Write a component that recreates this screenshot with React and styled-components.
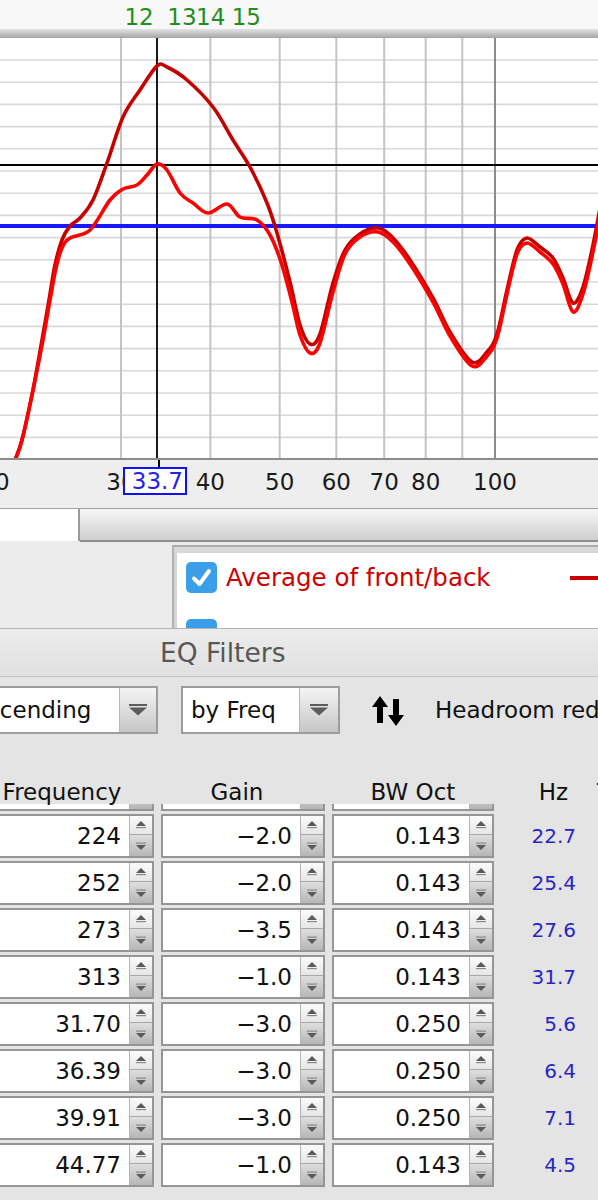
import React from "react";
import styled, { createGlobalStyle } from "styled-components";

const fx = (f) => 121 + 715.3 * Math.log10(f / 30);

const markers = [
  { id: 12, freq: 31.7 },
  { id: 13, freq: 36.39 },
  { id: 14, freq: 39.91 },
  { id: 15, freq: 44.77 },
];

const axisLabels = [20, 30, 40, 50, 60, 70, 80, 100];
const gridFreqs = [30, 40, 50, 60, 70, 80, 90];

const darkCurve = [
  [15, 460], [22, 440], [33, 390], [42, 340], [49, 300], [55, 265], [62, 240],
  [70, 226], [80, 218], [93, 200], [107, 163], [123, 117], [140, 90], [157, 66],
  [167, 67], [187, 80], [213, 107], [233, 140], [250, 167], [267, 203], [277, 233],
  [290, 282], [300, 325], [310, 344], [320, 334], [333, 283], [345, 250], [360, 234],
  [378, 228], [393, 238], [410, 260], [433, 298], [450, 332], [472, 362], [487, 352],
  [497, 334], [507, 290], [517, 250], [527, 238], [540, 247], [553, 258], [563, 278],
  [573, 303], [583, 287], [593, 245], [600, 208],
];

const brightCurve = [
  [15, 460], [22, 440], [33, 390], [43, 340], [50, 300], [56, 268], [62, 248],
  [70, 238], [90, 230], [110, 200], [123, 189], [137, 185], [147, 175], [157, 164],
  [167, 170], [180, 193], [193, 203], [208, 213], [227, 204], [240, 217], [257, 220],
  [270, 235], [281, 262], [292, 302], [300, 335], [310, 353], [320, 343], [333, 292],
  [345, 254], [360, 237], [378, 232], [393, 242], [410, 264], [433, 302], [450, 336],
  [472, 366], [487, 356], [497, 338], [507, 294], [517, 254], [527, 243], [540, 252],
  [553, 264], [563, 284], [573, 312], [583, 294], [593, 252], [600, 214],
];

// first entry is the row scrolled up under the header: only its bottom edge shows
const filters = [
  { freq: "", gain: "", bw: "", hz: "" },
  { freq: "224", gain: "−2.0", bw: "0.143", hz: "22.7" },
  { freq: "252", gain: "−2.0", bw: "0.143", hz: "25.4" },
  { freq: "273", gain: "−3.5", bw: "0.143", hz: "27.6" },
  { freq: "313", gain: "−1.0", bw: "0.143", hz: "31.7" },
  { freq: "31.70", gain: "−3.0", bw: "0.250", hz: "5.6" },
  { freq: "36.39", gain: "−3.0", bw: "0.250", hz: "6.4" },
  { freq: "39.91", gain: "−3.0", bw: "0.250", hz: "7.1" },
  { freq: "44.77", gain: "−1.0", bw: "0.143", hz: "4.5" },
];

function smooth(pts) {
  let d = `M${pts[0][0]},${pts[0][1]}`;
  for (let i = 0; i < pts.length - 1; i++) {
    const p0 = pts[i - 1] || pts[i];
    const p1 = pts[i];
    const p2 = pts[i + 1];
    const p3 = pts[i + 2] || p2;
    const c1x = p1[0] + (p2[0] - p0[0]) / 6;
    const c1y = p1[1] + (p2[1] - p0[1]) / 6;
    const c2x = p2[0] - (p3[0] - p1[0]) / 6;
    const c2y = p2[1] - (p3[1] - p1[1]) / 6;
    d += ` C${c1x.toFixed(1)},${c1y.toFixed(1)} ${c2x.toFixed(1)},${c2y.toFixed(1)} ${p2[0]},${p2[1]}`;
  }
  return d;
}

function SpinArrows() {
  return (
    <SpinButtons>
      <SpinUp>
        <svg width="10" height="8" viewBox="0 0 10 8">
          <polygon points="0,5 5,0 10,5" fill="#5a5a5a" />
          <rect x="0" y="6" width="10" height="1.2" fill="#8a8a8a" />
        </svg>
      </SpinUp>
      <SpinDown>
        <svg width="10" height="8" viewBox="0 0 10 8">
          <rect x="0" y="0.5" width="10" height="1.2" fill="#8a8a8a" />
          <polygon points="0,3 10,3 5,8" fill="#5a5a5a" />
        </svg>
      </SpinDown>
    </SpinButtons>
  );
}

function Spinner({ value }) {
  return (
    <SpinBox>
      <SpinValue>{value}</SpinValue>
      <SpinArrows />
    </SpinBox>
  );
}

function Combo({ width, arrowWidth, children }) {
  return (
    <ComboBox $w={width}>
      <ComboText>{children}</ComboText>
      <ComboArrow $w={arrowWidth}>
        <svg width="18" height="12" viewBox="0 0 18 12">
          <rect x="0" y="0" width="18" height="2" fill="#5c5c5c" />
          <polygon points="0,3.5 18,3.5 9,11.5" fill="#5c5c5c" />
        </svg>
      </ComboArrow>
    </ComboBox>
  );
}

export default function App() {
  const hLines = Array.from({ length: 18 }, (_, i) => 60 + 22.2 * i);

  return (
    <>
      <GlobalStyle />
      <Page>
        <MarkerStrip>
          {markers.map((m) => (
            <Marker key={m.id} style={{ left: fx(m.freq) + 1 }}>
              {m.id}
            </Marker>
          ))}
        </MarkerStrip>
        <ChartEdge />
        <Plot width="598" height="420" viewBox="0 38 598 420">
          <rect x="0" y="38" width="598" height="420" fill="#ffffff" />
          {hLines.map((y) => (
            <line key={y} x1="0" x2="598" y1={y} y2={y} stroke="#d8d8d8" strokeWidth="1.6" />
          ))}
          {gridFreqs.map((f) => (
            <line key={f} x1={fx(f)} x2={fx(f)} y1="38" y2="458" stroke="#c4c4c4" strokeWidth="2" />
          ))}
          <line x1={fx(100)} x2={fx(100)} y1="38" y2="458" stroke="#8a8a8a" strokeWidth="2" />
          <line x1="0" x2="598" y1="165" y2="165" stroke="#000" strokeWidth="1.8" />
          <line x1="157" x2="157" y1="38" y2="458" stroke="#000" strokeWidth="1.8" />
          <line x1="0" x2="598" y1="226" y2="226" stroke="#1818ff" strokeWidth="4" />
          <path d={smooth(darkCurve)} fill="none" stroke="#c40000" strokeWidth="3.6" strokeLinejoin="round" />
          <path d={smooth(brightCurve)} fill="none" stroke="#ff0000" strokeWidth="3.6" strokeLinejoin="round" />
        </Plot>
        <AxisStrip>
          {axisLabels.map((f) => (
            <AxisLabel key={f} style={{ left: fx(f) }}>
              {f}
            </AxisLabel>
          ))}
          <CursorBox>33.7</CursorBox>
        </AxisStrip>
        <ScrollRow>
          <ScrollTrack />
          <ScrollThumb />
        </ScrollRow>
        <LegendArea>
          <LegendBox>
            <LegendRow>
              <Check>
                <svg width="31" height="31" viewBox="0 0 31 31">
                  <path d="M8 16.5 L13.5 22 L23 9" fill="none" stroke="#fff" strokeWidth="4" strokeLinecap="round" strokeLinejoin="round" />
                </svg>
              </Check>
              <LegendLabel>Average of front/back</LegendLabel>
              <LegendSwatch />
            </LegendRow>
            <LegendRow>
              <Check />
              <LegendLabel $low>Individual front/back</LegendLabel>
              <LegendSwatch />
            </LegendRow>
          </LegendBox>
        </LegendArea>
        <EQPanel>
          <EQTitle>EQ Filters</EQTitle>
          <EQBody>
            <Toolbar>
              <Combo width={212} arrowWidth={36}>Descending</Combo>
              <ComboGap />
              <Combo width={159} arrowWidth={38}>by Freq</Combo>
              <SortIcon width="32" height="31" viewBox="0 0 32 31">
                <polygon points="8,1 0,12 5,12 5,28 11,28 11,12 16,12" fill="#000" />
                <polygon points="21,4 27,4 27,20 32,20 24,31 16,20 21,20" fill="#000" />
              </SortIcon>
              <HeadroomLabel>Headroom reduction</HeadroomLabel>
            </Toolbar>
            <HeaderRow>
              <HeaderCell $shift={5}>Frequency</HeaderCell>
              <HeaderCell $shift={-6}>Gain</HeaderCell>
              <HeaderCell $shift={0}>BW Oct</HeaderCell>
              <HeaderCell $right>Hz</HeaderCell>
              <HeaderCell $left>Type</HeaderCell>
            </HeaderRow>
            <Viewport>
              <RowList>
                {filters.map((r, i) => (
                  <Row key={i}>
                    <Spinner value={r.freq} />
                    <Spinner value={r.gain} />
                    <Spinner value={r.bw} />
                    <HzCell>{r.hz}</HzCell>
                  </Row>
                ))}
              </RowList>
            </Viewport>
          </EQBody>
        </EQPanel>
      </Page>
    </>
  );
}

const GlobalStyle = createGlobalStyle`
  html, body {
    margin: 0;
    padding: 0;
    overflow: hidden;
  }
  body {
    width: 598px;
    height: 1200px;
    background: #e4e4e4;
    font-family: "DejaVu Sans", "Liberation Sans", sans-serif;
    color: #111;
  }
`;

const Page = styled.div`
  width: 598px;
  height: 1200px;
  overflow: hidden;
  display: flex;
  flex-direction: column;
`;

const MarkerStrip = styled.div`
  position: relative;
  height: 29px;
  flex: none;
  background: #f8f8f8;
`;

const Marker = styled.span`
  position: absolute;
  top: 4px;
  transform: translateX(-50%);
  font-size: 23px;
  line-height: 26px;
  color: #1f8f1f;
`;

const ChartEdge = styled.div`
  height: 9px;
  flex: none;
  background: linear-gradient(#e4e4e4, #a4a4a4);
`;

const Plot = styled.svg`
  display: block;
  flex: none;
`;

const AxisStrip = styled.div`
  position: relative;
  flex: none;
  height: 48px;
  border-top: 2px solid #8c8c8c;
  background: #eeeeee;
  font-size: 23px;
  color: #1a1a1a;
`;

const AxisLabel = styled.span`
  position: absolute;
  top: 8px;
  transform: translateX(-50%);
  line-height: 28px;
`;

const CursorBox = styled.span`
  position: absolute;
  left: 123px;
  top: 7px;
  width: 64px;
  height: 28px;
  box-sizing: border-box;
  border: 2px solid #1010ff;
  background: #fff;
  color: #2323ee;
  text-align: right;
  padding-right: 2px;
  line-height: 24px;

  &::before {
    content: "";
    position: absolute;
    left: 33px;
    top: -9px;
    width: 2px;
    height: 7px;
    background: #000;
  }
`;

const ScrollRow = styled.div`
  display: flex;
  align-items: flex-start;
  flex: none;
  height: 34px;
  border-top: 1px solid #a0a0a0;
  background: #ececec;
`;

const ScrollTrack = styled.div`
  width: 78px;
  height: 32px;
  background: #fff;
  border-right: 2px solid #9a9a9a;
`;

const ScrollThumb = styled.div`
  flex: 1;
  height: 31px;
  background: linear-gradient(#f6f6f6, #cfcfcf);
  border-bottom: 2px solid #8e8e8e;
`;

const LegendArea = styled.div`
  flex: none;
  height: 85px;
  overflow: hidden;
  background: #ececec;
  padding-left: 172px;
  padding-top: 2px;
  box-sizing: border-box;
`;

const LegendBox = styled.div`
  width: 424px;
  padding: 15px 0 0 12px;
  background: #fff;
  border-top: 2px solid #ababab;
  border-left: 2px solid #b2b2b2;
  box-shadow: inset 0 6px 0 #d8d8d8, inset 3px 0 0 #d4d4d4;
`;

const LegendRow = styled.div`
  display: flex;
  align-items: center;
  height: 31px;
  gap: 9px;
  margin-bottom: 26px;
`;

const Check = styled.div`
  flex: none;
  width: 31px;
  height: 31px;
  border-radius: 5px;
  background: #3a9ee8;
  display: flex;
`;

const LegendLabel = styled.span`
  font-size: 24.5px;
  color: #d00000;
  white-space: nowrap;
  transform: translateY(${(p) => (p.$low ? 4 : 0)}px);
`;

const LegendSwatch = styled.div`
  margin-left: auto;
  width: 40px;
  height: 4px;
  background: #cc0000;
`;

const EQPanel = styled.div`
  flex: 1;
  display: flex;
  flex-direction: column;
  border-top: 1px solid #b4b4b4;
  background: #e4e4e4;
`;

const EQTitle = styled.div`
  height: 47px;
  line-height: 47px;
  padding-left: 160px;
  font-size: 26.5px;
  color: #575757;
  background: linear-gradient(#ececec, #e0e0e0);
  border-bottom: 1px solid #c4c4c4;
`;

const EQBody = styled.div`
  flex: 1;
  padding-top: 9px;
  display: flex;
  flex-direction: column;
  min-height: 0;
`;

const Toolbar = styled.div`
  display: flex;
  align-items: center;
  height: 48px;
  margin-left: -54px;
  white-space: nowrap;
`;

const ComboBox = styled.div`
  flex: none;
  display: flex;
  width: ${(p) => p.$w}px;
  height: 48px;
  box-sizing: border-box;
  border: 2px solid #9c9c9c;
  background: #fff;
`;

const ComboText = styled.div`
  flex: 1;
  padding-left: 8px;
  font-size: 23px;
  line-height: 44px;
  overflow: hidden;
`;

const ComboArrow = styled.div`
  flex: none;
  width: ${(p) => p.$w}px;
  display: flex;
  align-items: center;
  justify-content: center;
  border-left: 1px solid #b8b8b8;
  background: linear-gradient(#f4f4f4, #c6c6c6);
`;

const ComboGap = styled.div`
  width: 23px;
  flex: none;
`;

const SortIcon = styled.svg`
  flex: none;
  margin-left: 32px;
`;

const HeadroomLabel = styled.span`
  margin-left: 31px;
  font-size: 23px;
  color: #111;
`;

const tableColumns = `
  display: grid;
  grid-template-columns: 194px 164px 162px 82px 100px;
  column-gap: 7px;
  margin-left: -40px;
`;

const HeaderRow = styled.div`
  ${tableColumns}
  margin-top: 38px;
  height: 32px;
  flex: none;
  font-size: 23px;
  line-height: 40px;
  white-space: nowrap;
`;

const HeaderCell = styled.div`
  text-align: ${(p) => (p.$right ? "right" : p.$left ? "left" : "center")};
  padding-right: ${(p) => (p.$right ? 15 : 0)}px;
  padding-left: ${(p) => (p.$left ? 7 : 0)}px;
  transform: translateX(${(p) => p.$shift || 0}px);
`;

const Viewport = styled.div`
  flex: 1;
  overflow: hidden;
`;

const RowList = styled.div`
  display: flex;
  flex-direction: column;
  gap: 3px;
  margin-top: -37px;
`;

const Row = styled.div`
  ${tableColumns}
  height: 44px;
`;

const SpinBox = styled.div`
  display: flex;
  height: 44px;
  box-sizing: border-box;
  border: 2px solid #959595;
  background: #fff;
`;

const SpinValue = styled.div`
  flex: 1;
  text-align: right;
  padding-right: 8px;
  font-size: 23px;
  line-height: 40px;
  border-right: 1px solid #b4b4b4;
`;

const SpinButtons = styled.div`
  flex: none;
  width: 22px;
  display: flex;
  flex-direction: column;
`;

const SpinUp = styled.div`
  flex: 0 0 18px;
  display: flex;
  align-items: center;
  justify-content: center;
  background: linear-gradient(#fbfbfb, #e6e6e6);
  border-bottom: 1px solid #a8a8a8;
`;

const SpinDown = styled.div`
  flex: 1;
  display: flex;
  align-items: center;
  justify-content: center;
  background: linear-gradient(#dedede, #b6b6b6);
`;

const HzCell = styled.div`
  text-align: right;
  padding-right: 7px;
  font-size: 20px;
  line-height: 44px;
  color: #2626c6;
`;
